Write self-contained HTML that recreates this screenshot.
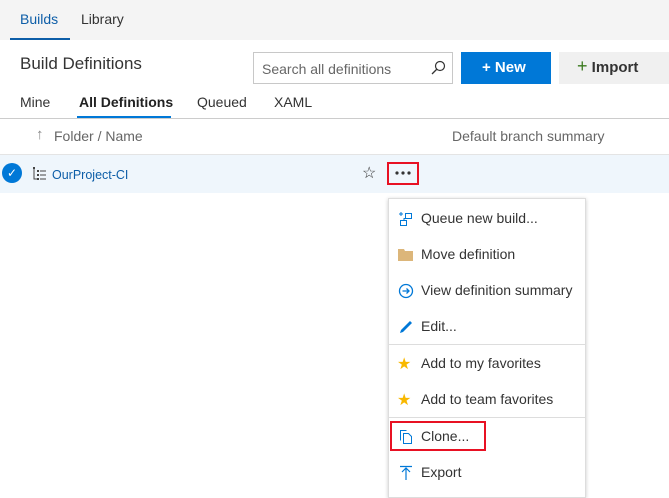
<!DOCTYPE html>
<html><head><style>
*{margin:0;padding:0;box-sizing:border-box}
body{width:669px;height:493px;overflow:hidden;background:#fff;font-family:"Liberation Sans",sans-serif;color:#333;position:relative;font-size:14px}
.a{position:absolute;white-space:nowrap}
</style></head><body>
<div class="a" style="left:0;top:0;width:669px;height:40px;background:#f4f4f4"></div>
<div class="a" style="left:20px;top:11px;font-size:14px;color:#0d5ea8">Builds</div>
<div class="a" style="left:81px;top:11px;font-size:14px;color:#333">Library</div>
<div class="a" style="left:10px;top:38px;width:60px;height:2px;background:#0d5ea8"></div>

<div class="a" style="left:20px;top:54px;font-size:17px;color:#333">Build Definitions</div>
<div class="a" style="left:253px;top:52px;width:200px;height:32px;border:1px solid #c8c8c8"></div>
<div class="a" style="left:262px;top:61px;font-size:14px;color:#666">Search all definitions</div>
<svg class="a" style="left:430px;top:60px" width="16" height="16" viewBox="0 0 16 16"><circle cx="10" cy="6" r="4.5" fill="none" stroke="#333" stroke-width="1.2"/><path d="M7 9 L2 14" stroke="#333" stroke-width="1.3"/></svg>
<div class="a" style="left:461px;top:52px;width:90px;height:32px;background:#0078d7"></div>
<div class="a" style="left:482px;top:59px;font-size:15px;color:#fff;font-weight:bold">+ New</div>
<div class="a" style="left:559px;top:52px;width:110px;height:32px;background:#f0f0f0"></div>
<div class="a" style="left:577px;top:59px;font-size:15px;color:#333;font-weight:bold"><span style="color:#3a7a1e;font-weight:normal;font-size:18px;line-height:15px">+</span> Import</div>

<div class="a" style="left:20px;top:94px;font-size:14px">Mine</div>
<div class="a" style="left:79px;top:94px;font-size:14px;font-weight:bold;color:#222">All Definitions</div>
<div class="a" style="left:197px;top:94px;font-size:14px">Queued</div>
<div class="a" style="left:274px;top:94px;font-size:14px">XAML</div>
<div class="a" style="left:77px;top:116px;width:94px;height:2px;background:#0078d7"></div>
<div class="a" style="left:0;top:118px;width:669px;height:1px;background:#ccc"></div>

<div class="a" style="left:36px;top:126px;font-size:15px;color:#888">↑</div>
<div class="a" style="left:54px;top:128px;font-size:14px;color:#666">Folder / Name</div>
<div class="a" style="left:452px;top:128px;font-size:14px;color:#666">Default branch summary</div>
<div class="a" style="left:0;top:154px;width:669px;height:1px;background:#e4e4e4"></div>

<div class="a" style="left:0;top:155px;width:669px;height:38px;background:#eff6fc"></div>
<div class="a" style="left:2px;top:163px;width:20px;height:20px;border-radius:50%;background:#0078d7;color:#fff;font-size:12px;text-align:center;line-height:20px">✓</div>
<svg class="a" style="left:33px;top:167px" width="14" height="14" viewBox="0 0 14 14"><rect x="0" y="0" width="2" height="2" fill="#444"/><rect x="4" y="3" width="2" height="2" fill="#444"/><rect x="4" y="7" width="2" height="2" fill="#444"/><rect x="4" y="11" width="2" height="2" fill="#444"/><path d="M7 4H13M7 8H13M7 12H13M1 2V12H4" stroke="#444" fill="none"/></svg>
<div class="a" style="left:52px;top:168px;font-size:12.5px;color:#0d5ea8">OurProject-CI</div>
<div class="a" style="left:362px;top:163px;font-size:16px;color:#333">☆</div>
<div class="a" style="left:387px;top:162px;width:32px;height:23px;border:2px solid #e81123"></div>
<svg class="a" style="left:395px;top:171px" width="16" height="4"><circle cx="2" cy="2" r="1.6" fill="#333"/><circle cx="8" cy="2" r="1.6" fill="#333"/><circle cx="14" cy="2" r="1.6" fill="#333"/></svg>

<div class="a" style="left:388px;top:198px;width:198px;height:300px;background:#fff;border:1px solid #ddd;box-shadow:0 1px 4px rgba(0,0,0,.2)"></div>
<div class="a" style="left:421px;top:210px;font-size:14px">Queue new build...</div>
<div class="a" style="left:421px;top:246px;font-size:14px">Move definition</div>
<div class="a" style="left:421px;top:282px;font-size:14px">View definition summary</div>
<div class="a" style="left:421px;top:318px;font-size:14px">Edit...</div>
<div class="a" style="left:389px;top:344px;width:196px;height:1px;background:#ddd"></div>
<div class="a" style="left:421px;top:355px;font-size:14px">Add to my favorites</div>
<div class="a" style="left:421px;top:391px;font-size:14px">Add to team favorites</div>
<div class="a" style="left:389px;top:417px;width:196px;height:1px;background:#ddd"></div>
<div class="a" style="left:421px;top:428px;font-size:14px">Clone...</div>
<div class="a" style="left:421px;top:464px;font-size:14px">Export</div>
<div class="a" style="left:390px;top:421px;width:96px;height:30px;border:2px solid #e81123"></div>

<svg class="a" style="left:398px;top:211px" width="16" height="16" viewBox="0 0 16 16" fill="none" stroke="#0078d7"><path d="M1 3H5M3 1V5"/><rect x="7.5" y="2.5" width="6" height="5"/><rect x="2.5" y="9.5" width="6" height="5"/><path d="M6 9.5V7.5H7.5"/></svg>
<svg class="a" style="left:398px;top:248px" width="16" height="14"><path d="M0 1H6L7 3H15V13H0Z" fill="#dcb67a"/></svg>
<svg class="a" style="left:398px;top:283px" width="16" height="16" viewBox="0 0 16 16" fill="none" stroke="#0078d7" stroke-width="1.3"><circle cx="8" cy="8" r="6.5"/><path d="M4.5 8H11M8.5 5.5L11 8L8.5 10.5"/></svg>
<svg class="a" style="left:398px;top:319px" width="16" height="16" viewBox="0 0 16 16"><path d="M2 14L3 11L12 2L14 4L5 13Z" fill="#0078d7"/></svg>
<div class="a" style="left:397px;top:354px;font-size:16px;color:#f8b800">★</div>
<div class="a" style="left:397px;top:390px;font-size:16px;color:#f8b800">★</div>
<svg class="a" style="left:398px;top:429px" width="16" height="16" viewBox="0 0 16 16" fill="none" stroke="#0078d7"><path d="M2.5 11.5V1.5H8.5"/><path d="M5.5 4.5H10.5L13.5 7.5V14.5H5.5Z"/></svg>
<svg class="a" style="left:398px;top:465px" width="16" height="16" viewBox="0 0 16 16" fill="none" stroke="#0078d7" stroke-width="1.2"><path d="M2 1.5H14M8 3V15M4 7L8 3L12 7"/></svg>
</body></html>
